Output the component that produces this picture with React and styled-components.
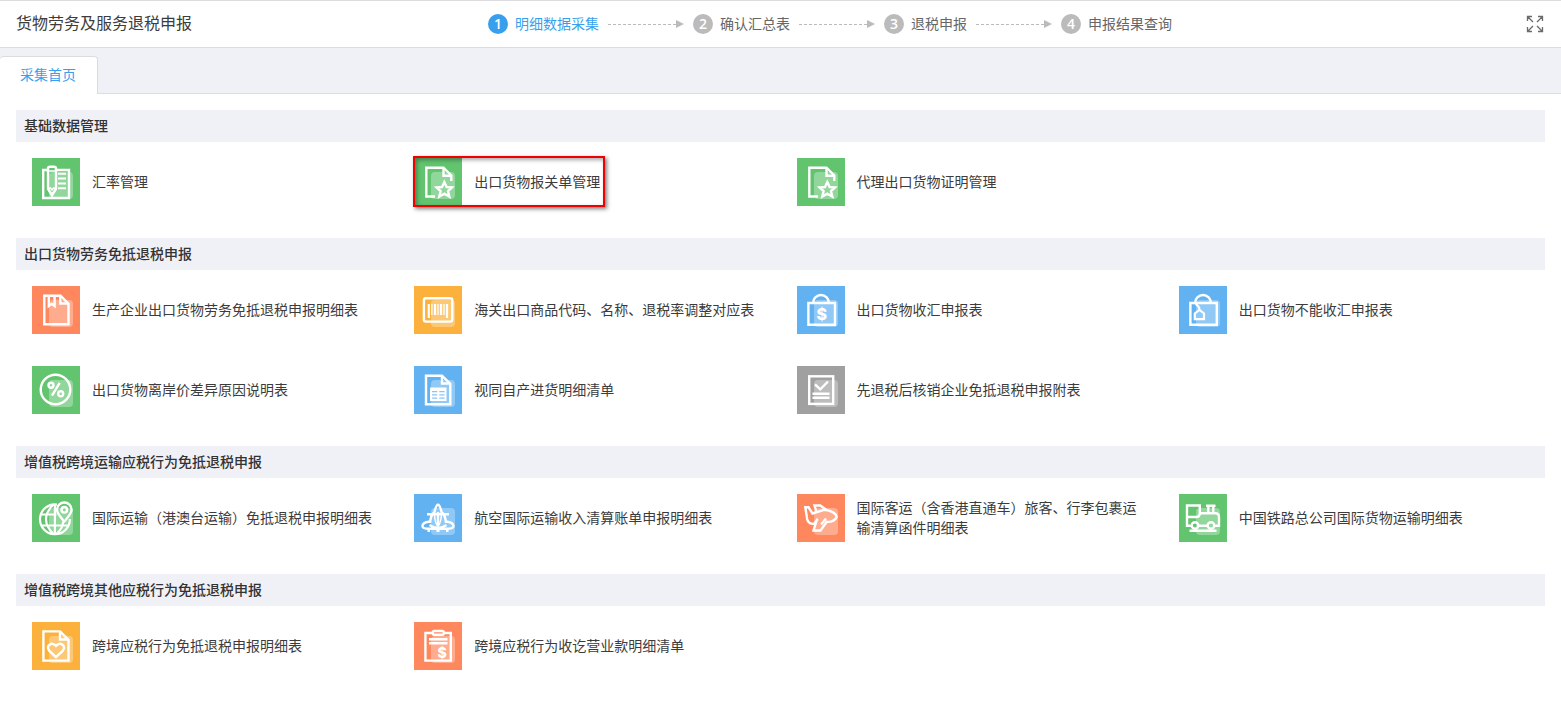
import React from "react";
import styled, { createGlobalStyle } from "styled-components";

const colors = {
    green: '#62c46f',
    orange: '#ff875d',
    yellow: '#fcb13c',
    blue: '#62b2f2',
    grey: '#a0a0a0',
    primary: '#389fed',
    line: '#dcdcdf',
    band: '#f0f1f7',
}

const GlobalStyle = createGlobalStyle`
    * {
        box-sizing: border-box;
    }
    body {
        margin: 0;
        background: #fff;
        color: #3c3c3c;
        font-family: "Microsoft YaHei", "Noto Sans CJK SC", sans-serif;
        font-size: 14px;
        line-height: 20px;
    }
    button {
        font: inherit;
        color: inherit;
        background: none;
        border: 0;
        padding: 0;
        cursor: pointer;
    }
`

const StyledHeader = styled.header`
    display: grid;
    grid-template-columns: 1fr auto 1fr;
    align-items: center;
    height: 48px;
    padding: 0 16px;
    border-top: 1px solid ${colors.line};
    border-bottom: 1px solid ${colors.line};
`
const StyledPageTitle = styled.h1`
    margin: 0;
    padding-bottom: 4px;
    font-size: 16px;
    font-weight: 400;
    line-height: 24px;
    white-space: nowrap;
`
const StyledSteps = styled.ol`
    display: flex;
    align-items: center;
    gap: 9px;
    margin: 0 0 0 99px;
    padding: 0;
    list-style: none;
`
const StyledStep = styled.li`
    display: flex;
    align-items: center;
    gap: 9px;
    white-space: nowrap;
    color: ${props => props.$active ? colors.primary : '#666'};
`
const StyledStepName = styled.span`
    display: flex;
    align-items: center;
    gap: 7px;
`
const StyledStepLabel = styled.span`
    padding-bottom: 2px;
`
const StyledStepNumber = styled.span`
    width: 20px;
    height: 20px;
    border-radius: 50%;
    background: ${props => props.$active ? colors.primary : '#bbb'};
    color: #fff;
    font-family: "Open Sans", sans-serif;
    font-weight: 600;
    text-align: center;
`
const StyledArrow = styled.span`
    display: flex;
    align-items: center;
    width: 76px;

    &::before {
        content: '';
        flex: 1;
        border-top: 1px dashed #bbb;
    }
    &::after {
        content: '';
        border: 4px solid transparent;
        border-left: 8px solid #bbb;
        border-right: 0;
    }
`
const StyledFullscreen = styled.button`
    display: flex;
    justify-self: end;
`
const StyledTabs = styled.nav`
    display: flex;
    align-items: flex-end;
    height: 46px;
    background: ${colors.band};
    border-bottom: 1px solid ${colors.line};
`
const StyledTab = styled.button`
    height: 38px;
    margin-bottom: -1px;
    && {
        padding: 0 21px 4px 20px;
        background: #fff;
        color: ${colors.primary};
        border-top: 1px solid ${colors.line};
        border-right: 1px solid ${colors.line};
    }
    border-radius: 4px 4px 0 0;
`
const StyledMain = styled.main`
    display: flex;
    flex-direction: column;
    gap: 16px;
    padding: 16px;
`
const StyledSectionTitle = styled.h2`
    margin: 0;
    padding: 5px 8px 7px;
    background: ${colors.band};
    color: #333;
    font-size: 14px;
    font-weight: 500;
    line-height: 20px;
`
const StyledGrid = styled.div`
    display: grid;
    grid-template-columns: repeat(4, 1fr);
`
const StyledCell = styled.div`
    display: flex;
    padding: 16px;
`
const StyledItem = styled.button`
    position: relative;
    display: flex;
    align-items: center;
    gap: 12px;
    text-align: left;
`
const StyledLabel = styled.span`
    padding-bottom: 2px;
`
const StyledHighlight = styled.span`
    position: absolute;
    inset: -2px -5px -1px -1px;
    border: 2px solid #f00000;
    box-shadow: 2px 2px 4px rgba(0, 0, 0, .5), inset 2px 2px 4px rgba(0, 0, 0, .35);
`
const StyledIcon = styled.svg`
    flex: none;
    display: block;
    width: 48px;
    height: 48px;
    background: ${props => props.$color};
    fill: none;
    stroke: #fff;
    stroke-width: 2.4;

    .solid {
        fill: #fff;
        stroke: none;
    }
    text {
        fill: #fff;
        stroke: none;
        font-family: Inter, sans-serif;
        font-weight: 800;
        text-anchor: middle;
    }
`

const starDoc = (
    <>
        <path d="M21 38.5H12.3V9.7H29.5L37.3 17.5V23" />
        <path d="M29.5 9.5V17.8H37.5" />
        <path d="M30.3 24L32.6 29L38 29.5L34 33.1L35.3 38.5L30.3 35.7L25.3 38.5L26.6 33.1L22.6 29.5L28 29Z" />
    </>
)

const glyphs = {
    notebook: (
        <>
            <path d="M15 12H11.2V40H37V12H25" />
            <path d="M16 12V10.5Q16 8.7 18 8.7H22Q24 8.7 24 10.5V31L20 37.5L16 31Z" />
            <path d="M16 13H24M16 31L18.5 30L20 32L21.8 30L24 31" strokeWidth="1.5" />
            <path className="solid" d="M18 34.2H22L20 38Z" />
            <path d="M26 15.8H34M26 20.6H34M26 25.4H34M26 30.2H34" strokeWidth="2" />
        </>
    ),
    starDoc,
    bookmark: (
        <>
            <path d="M12.3 9.7H28.5L36.5 17.7V38.3H12.3Z" />
            <path d="M28.3 9.5V17.5H36.5M16.8 9.5V20L19.7 17.7L22.6 20V9.5" />
        </>
    ),
    barcode: (
        <>
            <rect x="9.9" y="12.2" width="28.4" height="23.4" rx="2" />
            <path d="M14.8 18V32M21 18V29M27 18V29M33 18V32" strokeWidth="2.2" />
            <path d="M17.9 18V29M24 18V29M30 18V29" strokeWidth="1.3" />
        </>
    ),
    bagMoney: (
        <>
            <path d="M11.4 17H38V38.8H11.4ZM16 17A8 8 0 0 1 32 17" />
            <text x="24.7" y="34" fontSize="16">$</text>
        </>
    ),
    bagTag: (
        <>
            <path d="M11.4 17H37.8V38.8H11.4ZM16 17A8 8 0 0 1 32 17" />
            <path d="M17 17.5C17 20 20.5 19 20.5 24M15.8 33.2V27.5L20.5 23.8L25 27.5V33.2Z" strokeWidth="2.2" />
        </>
    ),
    percent: (
        <>
            <circle cx="23.5" cy="23.5" r="14.8" />
            <circle cx="19" cy="19.3" r="2.5" />
            <circle cx="28.7" cy="27.8" r="2.5" />
            <path d="M27.7 16.8L20 29.7" />
        </>
    ),
    sheet: (
        <>
            <path d="M12 9.7H28L36.3 17.8V38.3H12Z" />
            <path d="M28 9.5V17.5H36.3" />
            <path className="solid" d="M16 21.5H32.5V35H16Z" />
            <path d="M18 25.6H23.3M25.3 25.6H30.6M18 28.9H23.3M25.3 28.9H30.6M18 32.2H23.3M25.3 32.2H30.6" stroke={colors.blue} strokeWidth="1.2" opacity=".75" />
        </>
    ),
    checklist: (
        <>
            <rect x="12.2" y="10.3" width="24" height="27.6" />
            <path d="M18 18.3L23.3 23.3L31 15.5M15.5 27.7H32.5M15.5 31.8H32.5" />
        </>
    ),
    globe: (
        <>
            <path d="M25 10.6A14.9 14.9 0 1 0 37.8 25M21.5 10.5Q6.5 25 21.5 40M24.5 40Q31.5 33.5 31 27.5M22.9 11V40M8.5 20.5H24.5M9 31.5H36.5" strokeWidth="2.2" />
            <path d="M32.3 27.5C28 22.5 25 19.5 25 15.8A7.3 7.3 0 0 1 39.6 15.8C39.6 19.5 36.6 22.5 32.3 27.5Z" />
            <circle cx="32.3" cy="15.8" r="2.8" />
        </>
    ),
    airliner: (
        <>
            <path d="M24 10C22 12 21 15 20.5 18C18 20 16.5 23 16 29M24 10C26 12 27 15 27.5 18C30 20 31.5 23 32 29M13 20.2H35M24 18V31" />
            <path d="M20.8 19Q19.8 26 23.9 33Q28 26 27.2 19" strokeWidth="1.4" />
            <path d="M16 27.5C11 28 8.3 30 8.5 32.2C8.6 34.2 12 34.8 15 34.8H33C37 34.8 39.6 34 39.5 32C39.4 29.8 37 28 32 27.5M15.5 31Q24 37 32.5 31" />
            <path d="M13.5 36.8H16M22.5 36.8H25.5M32 36.8H34.5" />
        </>
    ),
    plane: (
        <>
            <path d="M20.5 25.5L17 29.8C12 30.5 9.8 27 9.7 22L8.3 13.2H11.5L15.5 19.5L27 15.8C33 16.5 38.7 18.5 39.7 23C37.5 27.7 33.5 28 29.8 27.8L23.5 36.5H16.5L20.3 24.5M29 24.5L24 30.5" />
            <path d="M19.5 18L17.5 11.5H23.3L29.5 16" />
        </>
    ),
    train: (
        <>
            <path d="M12 31.8H8V11.5H20.8V19.2H37Q40 19.5 40 23V31.8H36M20 31.8H28M8 23H17.5Q20.8 23 20.8 19.2" />
            <circle cx="16" cy="31.5" r="3.3" />
            <circle cx="32" cy="31.5" r="3.3" />
            <path d="M10.5 36.8H37.5M27 11.8H36.5M29.3 12V19M34.3 12V19" />
        </>
    ),
    heart: (
        <>
            <path d="M11.4 9.4H28L36.5 17.8V38.6H11.4Z" />
            <path d="M28 9.2V17.5H36.5" />
            <path d="M24 35.2L17.3 28.8C13 24.3 19.8 18.8 24 23.8C28.2 18.8 35 24.3 30.7 28.8Z" />
        </>
    ),
    clipboard: (
        <>
            <path d="M18 11H11.4V38.6H36.8V11H30" />
            <rect x="18.8" y="9" width="11" height="3.8" rx="1.5" />
            <path d="M15 17.2H33.5M15 21.3H33.5" />
            <text x="28" y="36.2" fontSize="14">$</text>
        </>
    ),
}

const steps = ['明细数据采集', '确认汇总表', '退税申报', '申报结果查询']

const sections = [
    {
        title: '基础数据管理',
        items: [
            { name: '汇率管理', glyph: 'notebook', color: colors.green },
            { name: '出口货物报关单管理', glyph: 'starDoc', color: colors.green, highlighted: true },
            { name: '代理出口货物证明管理', glyph: 'starDoc', color: colors.green },
        ],
    },
    {
        title: '出口货物劳务免抵退税申报',
        items: [
            { name: '生产企业出口货物劳务免抵退税申报明细表', glyph: 'bookmark', color: colors.orange },
            { name: '海关出口商品代码、名称、退税率调整对应表', glyph: 'barcode', color: colors.yellow },
            { name: '出口货物收汇申报表', glyph: 'bagMoney', color: colors.blue },
            { name: '出口货物不能收汇申报表', glyph: 'bagTag', color: colors.blue },
            { name: '出口货物离岸价差异原因说明表', glyph: 'percent', color: colors.green },
            { name: '视同自产进货明细清单', glyph: 'sheet', color: colors.blue },
            { name: '先退税后核销企业免抵退税申报附表', glyph: 'checklist', color: colors.grey },
        ],
    },
    {
        title: '增值税跨境运输应税行为免抵退税申报',
        items: [
            { name: '国际运输（港澳台运输）免抵退税申报明细表', glyph: 'globe', color: colors.green },
            { name: '航空国际运输收入清算账单申报明细表', glyph: 'airliner', color: colors.blue },
            { name: '国际客运（含香港直通车）旅客、行李包裹运输清算函件明细表', glyph: 'plane', color: colors.orange },
            { name: '中国铁路总公司国际货物运输明细表', glyph: 'train', color: colors.green },
        ],
    },
    {
        title: '增值税跨境其他应税行为免抵退税申报',
        items: [
            { name: '跨境应税行为免抵退税申报明细表', glyph: 'heart', color: colors.yellow },
            { name: '跨境应税行为收讫营业款明细清单', glyph: 'clipboard', color: colors.orange },
        ],
    },
]

const Steps = () => (
    <StyledSteps>
        {steps.map((name, i) => (
            <StyledStep key={name} $active={i === 0}>
                <StyledStepName>
                    <StyledStepNumber $active={i === 0}>{i + 1}</StyledStepNumber>
                    <StyledStepLabel>{name}</StyledStepLabel>
                </StyledStepName>
                {i < steps.length - 1 && <StyledArrow />}
            </StyledStep>
        ))}
    </StyledSteps>
)

const Item = (props) => (
    <StyledCell>
        <StyledItem type="button">
            <StyledIcon viewBox="0 0 48 48" $color={props.color} aria-hidden="true">
                <rect x="17" y="14" width="24" height="27" rx="4" fill="#fff" stroke="none" opacity=".3" />
                {glyphs[props.glyph]}
            </StyledIcon>
            <StyledLabel>{props.name}</StyledLabel>
            {props.highlighted && <StyledHighlight />}
        </StyledItem>
    </StyledCell>
)

const App = () => {
    return(
        <>
            <GlobalStyle />
            <StyledHeader>
                <StyledPageTitle>货物劳务及服务退税申报</StyledPageTitle>
                <Steps />
                <StyledFullscreen type="button" aria-label="全屏">
                    <svg width="20" height="20" viewBox="0 0 20 20" fill="none" stroke="#6a6a6a" strokeWidth="1.3">
                        <path d="M2.5 7V2.5H7M2.5 2.5L8 8M13 2.5H17.5V7M17.5 2.5L12 8M2.5 13V17.5H7M2.5 17.5L8 12M13 17.5H17.5V13M17.5 17.5L12 12" />
                    </svg>
                </StyledFullscreen>
            </StyledHeader>
            <StyledTabs>
                <StyledTab type="button">采集首页</StyledTab>
            </StyledTabs>
            <StyledMain>
                {sections.map(section => (
                    <section key={section.title}>
                        <StyledSectionTitle>{section.title}</StyledSectionTitle>
                        <StyledGrid>
                            {section.items.map(item => <Item key={item.name} {...item} />)}
                        </StyledGrid>
                    </section>
                ))}
            </StyledMain>
        </>
    )
}

export default App;
